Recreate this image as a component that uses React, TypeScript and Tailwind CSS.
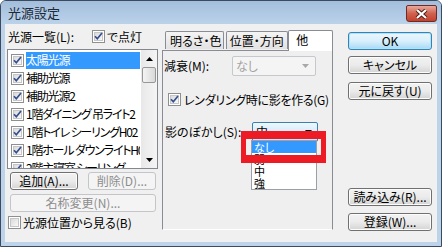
import React from "react";

const Check = ({ checked = true }: { checked?: boolean }) => (
  <svg width="13" height="13" viewBox="0 0 13 13" className="shrink-0">
    <defs>
      <linearGradient id="cbg" x1="0" y1="0" x2="1" y2="1">
        <stop offset="0" stopColor="#d8d8d8" />
        <stop offset="1" stopColor="#fbfbfb" />
      </linearGradient>
    </defs>
    <rect x="0.5" y="0.5" width="12" height="12" fill="#fff" stroke="#8e8f8f" />
    <rect x="2.5" y="2.5" width="8" height="8" fill="url(#cbg)" stroke="#c6c6c6" />
    {checked && (
      <path d="M3 6.2 L5.3 8.8 L10 3" fill="none" stroke="#35508f" strokeWidth="1.7" />
    )}
  </svg>
);

const Arrow = ({ color = "#000", up = false }: { color?: string; up?: boolean }) => (
  <svg width="7" height="4" viewBox="0 0 7 4">
    <path d={up ? "M0 4 L3.5 0 L7 4 Z" : "M0 0 L7 0 L3.5 4 Z"} fill={color} />
  </svg>
);

const Btn = ({
  label,
  w,
  disabled = false,
  primary = false,
  className = "",
}: {
  label: string;
  w: string;
  disabled?: boolean;
  primary?: boolean;
  className?: string;
}) => (
  <div
    className={`${w} h-[18px] rounded-[3px] border flex items-center justify-center ${
      disabled
        ? "border-[#c3c5c8] bg-[#f4f4f4] text-[#8d8d8d]"
        : primary
        ? "border-[#3c7fb1] bg-gradient-to-b from-[#eaf6fd] via-[#d9f0fc] to-[#a7d9f5] shadow-[inset_0_0_0_1px_#a7e6fc]"
        : "border-[#707070] bg-gradient-to-b from-[#f2f2f2] via-[#ebebeb] to-[#d4d4d4] shadow-[inset_0_0_0_1px_#fcfcfc]"
    } ${className}`}
  >
    {label}
  </div>
);

const items = [
  "太陽光源",
  "補助光源",
  "補助光源2",
  "1階ダイニング 吊ライト2",
  "1階トイレ シーリングH02",
  "1階ホール ダウンライトH02",
  "2階主寝室 シーリング",
];

export default function App() {
  return (
    <div className="w-[442px] h-[247px] bg-white font-['Noto_Sans_CJK_JP',sans-serif] [font-feature-settings:'palt'] text-[12px] leading-none text-black">
      <div className="w-full h-full flex flex-col rounded-t-[6px] border border-[#3b4a5e] bg-[#bcd3ea] overflow-hidden">
        {/* title bar */}
        <div className="h-[23px] shrink-0 flex items-center bg-gradient-to-b from-[#a3bedc] to-[#bbd2ea]">
          <span className="ml-[7px] text-[13px] text-[#1e2a38]">光源設定</span>
          <div className="ml-auto mr-[4px] mt-[2px] w-[31px] h-[17px] rounded-b-[3px] rounded-t-[2px] border border-[#6f2b23] bg-gradient-to-b from-[#e9a99b] via-[#d0624f] to-[#c4412c] flex items-center justify-center">
            <svg width="13" height="10" viewBox="0 0 13 10">
              <path d="M2 1 L11 9 M11 1 L2 9" stroke="#4a1d16" strokeWidth="4" />
              <path d="M2 1 L11 9 M11 1 L2 9" stroke="#fff" strokeWidth="2.2" />
            </svg>
          </div>
        </div>

        {/* client */}
        <div className="relative flex-1 mx-[4px] mb-[4px] bg-[#f0f0f0] flex pl-[2px]">
          {/* left column */}
          <div className="w-[151px] flex flex-col pt-[6px]">
            <div className="h-[13px] flex items-center">
              <span className="ml-[1px] w-[84px]">光源一覧(L):</span>
              <Check />
              <span className="ml-[2px]">で点灯</span>
            </div>
            <div className="mt-[6px] h-[120px] border border-[#828790] bg-white flex overflow-hidden">
              <div className="flex-1 pt-[1px] overflow-hidden">
                {items.map((t, i) => (
                  <div key={i} className="h-[18px] flex items-center pl-[3px]">
                    <Check />
                    <span
                      className={`ml-[2px] mr-[1px] flex-1 h-[17px] flex items-center whitespace-nowrap overflow-hidden tracking-[-1.2px] ${
                        i === 0 ? "bg-[#3399ff] text-white" : ""
                      }`}
                    >
                      {t}
                    </span>
                  </div>
                ))}
              </div>
              <div className="w-[16px] bg-gradient-to-r from-[#e8e8e8] to-[#f5f5f5] flex flex-col">
                <div className="h-[17px] flex items-center justify-center">
                  <Arrow up />
                </div>
                <div className="mx-[1px] h-[16px] rounded-[2px] border border-[#979797] bg-gradient-to-r from-[#f4f4f4] to-[#d9d9d9]" />
                <div className="flex-1" />
                <div className="h-[17px] flex items-center justify-center">
                  <Arrow />
                </div>
              </div>
            </div>
            <div className="mt-[3px] flex gap-[10px] pl-[3px]">
              <Btn label="追加(A)..." w="w-[68px]" />
              <Btn label="削除(D)..." w="w-[68px]" disabled />
            </div>
            <div className="mt-[4px] pl-[3px]">
              <Btn label="名称変更(N)..." w="w-[146px]" disabled />
            </div>
            <div className="mt-[4px] h-[13px] flex items-center pl-[1px]">
              <Check checked={false} />
              <span className="ml-[2px]">光源位置から見る(B)</span>
            </div>
          </div>

          {/* tab column */}
          <div className="ml-[4px] w-[171px] flex flex-col pt-[5px]">
            <div className="h-[21px] flex items-end relative z-10">
              <div className="ml-[3px] w-[59px] h-[18px] border border-b-0 border-[#898c95] rounded-t-[2px] bg-gradient-to-b from-[#f4f4f4] to-[#e2e2e2] flex items-center pl-[4px] mb-[1px]">
                明るさ・色
              </div>
              <div className="ml-[2px] w-[63px] h-[18px] border border-b-0 border-[#898c95] rounded-t-[2px] bg-gradient-to-b from-[#f4f4f4] to-[#e2e2e2] flex items-center pl-[3px] mb-[1px]">
                位置・方向
              </div>
              <div className="w-[45px] h-[21px] border border-b-0 border-[#898c95] rounded-t-[2px] bg-white flex items-start pt-[3px] pl-[7px] -mb-[1px]">
                他
              </div>
            </div>
            <div className="h-[180px] border border-[#898c95] border-b-white bg-[#efefef] flex flex-col">
              <div className="mt-[5px] flex items-center">
                <span className="ml-[1px] w-[68px]">減衰(M):</span>
                <div className="w-[84px] h-[20px] rounded-[2px] border border-[#c5c8cc] bg-[#f4f4f4] flex items-center pl-[3px] pr-[6px] text-[#a3a3a3]">
                  <span className="flex-1">なし</span>
                  <Arrow color="#a8a8a8" />
                </div>
              </div>
              <div className="mt-[17px] h-[13px] flex items-center pl-[5px]">
                <Check />
                <span className="ml-[3px] whitespace-nowrap tracking-[-0.3px]">レンダリング時に影を作る(G)</span>
              </div>
              <div className="mt-[16px] flex items-center">
                <span className="ml-[2px] w-[87px]">影のぼかし(S):</span>
                <div className="w-[66px] h-[20px] rounded-[2px] border border-[#3c7fb1] bg-gradient-to-b from-[#eef7fd] to-[#c0e2f7] flex items-center pl-[3px] pr-[5px]">
                  <span className="flex-1">中</span>
                  <Arrow />
                </div>
              </div>
            </div>
          </div>

          {/* right column */}
          <div className="ml-[15px] w-[84px] flex flex-col pt-[8px]">
            <Btn label="OK" w="w-[84px]" primary />
            <Btn label="キャンセル" w="w-[84px]" className="mt-[6px]" />
            <Btn label="元に戻す(U)" w="w-[84px]" className="mt-[8px]" />
            <div className="flex-1" />
            <Btn label="読み込み(R)..." w="w-[84px]" />
            <Btn label="登録(W)..." w="w-[84px]" className="mt-[7px] mb-[11px]" />
          </div>

          {/* dropdown list */}
          <div className="absolute left-[246px] top-[116px] w-[66px] border border-[#9a9fa8] bg-white z-20">
            {["なし", "弱", "中", "強"].map((t, i) => (
              <div
                key={t}
                className={`h-[12px] flex items-center pl-[2px] text-[11px] ${i === 0 ? "bg-[#3399ff] text-white" : ""}`}
              >
                {t}
              </div>
            ))}
          </div>

          {/* annotation */}
          <div className="absolute left-[236px] top-[107px] w-[85px] h-[32px] border-x-[5px] border-y-[8px] border-[#ed1c24] z-30" />
        </div>
      </div>
    </div>
  );
}
